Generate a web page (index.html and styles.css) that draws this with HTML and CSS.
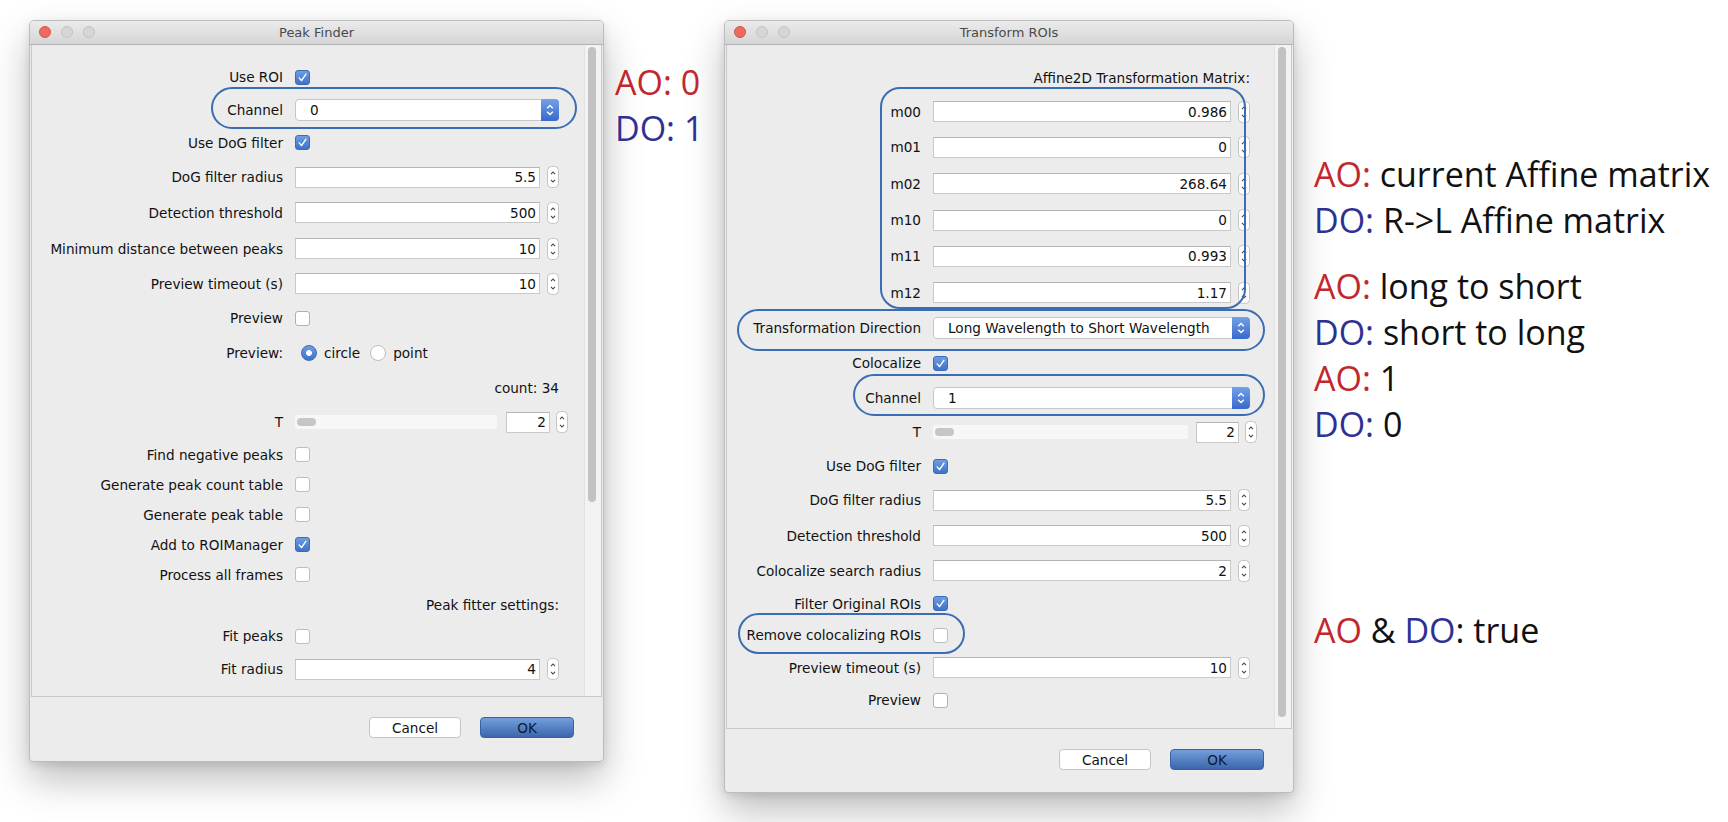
FILE: index.html
```html
<!DOCTYPE html>
<html>
<head>
<meta charset="utf-8">
<title>Peak Finder / Transform ROIs</title>
<link rel="stylesheet" href="styles.css">
</head>
<body>
<div class="desk">

  <section class="win win-peak">
    <header class="titlebar">
      <div class="lights"><span class="light close"></span><span class="light"></span><span class="light"></span></div>
      <div class="title">Peak Finder</div>
    </header>
    <div class="pane">
      <div class="form form-peak">
        <div class="lbl">Use ROI</div>
        <div class="ctl"><span class="cb on"><svg viewBox="0 0 13 13" width="13" height="13"><path d="M3.2 6.9 5.5 9.6 10 3.2" fill="none" stroke="#fff" stroke-width="1.4" stroke-linecap="round" stroke-linejoin="round"/></svg></span></div>

        <div class="lbl">Channel</div>
        <div class="ctl"><div class="combo"><span>0</span><span class="combo-arrow"><svg viewBox="0 0 18 22" width="18" height="22"><path d="M6.2 9.2 9 6.4 11.8 9.2M6.2 12.8 9 15.6 11.8 12.8" fill="none" stroke="#fff" stroke-width="1.4"/></svg></span></div></div>

        <div class="lbl">Use DoG filter</div>
        <div class="ctl"><span class="cb on"><svg viewBox="0 0 13 13" width="13" height="13"><path d="M3.2 6.9 5.5 9.6 10 3.2" fill="none" stroke="#fff" stroke-width="1.4" stroke-linecap="round" stroke-linejoin="round"/></svg></span></div>

        <div class="lbl">DoG filter radius</div>
        <div class="ctl num"><div class="field">5.5</div><svg class="spin" viewBox="0 0 12 22" width="12" height="22"><rect x=".5" y=".5" width="11" height="21" rx="4" fill="#fff" stroke="#c4c4c4"/><path d="M4 8.2 6 6 8 8.2M4 13.8 6 16 8 13.8" fill="none" stroke="#444" stroke-width="1.1"/></svg></div>

        <div class="lbl">Detection threshold</div>
        <div class="ctl num"><div class="field">500</div><svg class="spin" viewBox="0 0 12 22" width="12" height="22"><rect x=".5" y=".5" width="11" height="21" rx="4" fill="#fff" stroke="#c4c4c4"/><path d="M4 8.2 6 6 8 8.2M4 13.8 6 16 8 13.8" fill="none" stroke="#444" stroke-width="1.1"/></svg></div>

        <div class="lbl">Minimum distance between peaks</div>
        <div class="ctl num"><div class="field">10</div><svg class="spin" viewBox="0 0 12 22" width="12" height="22"><rect x=".5" y=".5" width="11" height="21" rx="4" fill="#fff" stroke="#c4c4c4"/><path d="M4 8.2 6 6 8 8.2M4 13.8 6 16 8 13.8" fill="none" stroke="#444" stroke-width="1.1"/></svg></div>

        <div class="lbl">Preview timeout (s)</div>
        <div class="ctl num"><div class="field">10</div><svg class="spin" viewBox="0 0 12 22" width="12" height="22"><rect x=".5" y=".5" width="11" height="21" rx="4" fill="#fff" stroke="#c4c4c4"/><path d="M4 8.2 6 6 8 8.2M4 13.8 6 16 8 13.8" fill="none" stroke="#444" stroke-width="1.1"/></svg></div>

        <div class="lbl">Preview</div>
        <div class="ctl"><span class="cb focus"></span></div>

        <div class="lbl">Preview:</div>
        <div class="ctl radios"><span class="radio on"></span><span class="rtext">circle</span><span class="radio"></span><span class="rtext">point</span></div>

        <div class="span">count: 34</div>

        <div class="lbl">T</div>
        <div class="ctl slide"><div class="slider"><span class="knob"></span></div><div class="field small">2</div><svg class="spin" viewBox="0 0 12 22" width="12" height="22"><rect x=".5" y=".5" width="11" height="21" rx="4" fill="#fff" stroke="#c4c4c4"/><path d="M4 8.2 6 6 8 8.2M4 13.8 6 16 8 13.8" fill="none" stroke="#444" stroke-width="1.1"/></svg></div>

        <div class="lbl">Find negative peaks</div>
        <div class="ctl"><span class="cb"></span></div>

        <div class="lbl">Generate peak count table</div>
        <div class="ctl"><span class="cb"></span></div>

        <div class="lbl">Generate peak table</div>
        <div class="ctl"><span class="cb"></span></div>

        <div class="lbl">Add to ROIManager</div>
        <div class="ctl"><span class="cb on"><svg viewBox="0 0 13 13" width="13" height="13"><path d="M3.2 6.9 5.5 9.6 10 3.2" fill="none" stroke="#fff" stroke-width="1.4" stroke-linecap="round" stroke-linejoin="round"/></svg></span></div>

        <div class="lbl">Process all frames</div>
        <div class="ctl"><span class="cb"></span></div>

        <div class="span">Peak fitter settings:</div>

        <div class="lbl">Fit peaks</div>
        <div class="ctl"><span class="cb"></span></div>

        <div class="lbl">Fit radius</div>
        <div class="ctl num"><div class="field">4</div><svg class="spin" viewBox="0 0 12 22" width="12" height="22"><rect x=".5" y=".5" width="11" height="21" rx="4" fill="#fff" stroke="#c4c4c4"/><path d="M4 8.2 6 6 8 8.2M4 13.8 6 16 8 13.8" fill="none" stroke="#444" stroke-width="1.1"/></svg></div>
      </div>
      <div class="track"><div class="thumb"></div></div>
    </div>
    <footer class="footer"><button class="btn">Cancel</button><button class="btn btn-ok">OK</button></footer>
    <div class="mark mark-peak-channel"></div>
  </section>

  <section class="win win-transform">
    <header class="titlebar">
      <div class="lights"><span class="light close"></span><span class="light"></span><span class="light"></span></div>
      <div class="title">Transform ROIs</div>
    </header>
    <div class="pane">
      <div class="form form-transform">
        <div class="span">Affine2D Transformation Matrix:</div>

        <div class="lbl">m00</div>
        <div class="ctl num"><div class="field">0.986</div><svg class="spin" viewBox="0 0 12 22" width="12" height="22"><rect x=".5" y=".5" width="11" height="21" rx="4" fill="#fff" stroke="#c4c4c4"/><path d="M4 8.2 6 6 8 8.2M4 13.8 6 16 8 13.8" fill="none" stroke="#444" stroke-width="1.1"/></svg></div>
        <div class="lbl">m01</div>
        <div class="ctl num"><div class="field">0</div><svg class="spin" viewBox="0 0 12 22" width="12" height="22"><rect x=".5" y=".5" width="11" height="21" rx="4" fill="#fff" stroke="#c4c4c4"/><path d="M4 8.2 6 6 8 8.2M4 13.8 6 16 8 13.8" fill="none" stroke="#444" stroke-width="1.1"/></svg></div>
        <div class="lbl">m02</div>
        <div class="ctl num"><div class="field">268.64</div><svg class="spin" viewBox="0 0 12 22" width="12" height="22"><rect x=".5" y=".5" width="11" height="21" rx="4" fill="#fff" stroke="#c4c4c4"/><path d="M4 8.2 6 6 8 8.2M4 13.8 6 16 8 13.8" fill="none" stroke="#444" stroke-width="1.1"/></svg></div>
        <div class="lbl">m10</div>
        <div class="ctl num"><div class="field">0</div><svg class="spin" viewBox="0 0 12 22" width="12" height="22"><rect x=".5" y=".5" width="11" height="21" rx="4" fill="#fff" stroke="#c4c4c4"/><path d="M4 8.2 6 6 8 8.2M4 13.8 6 16 8 13.8" fill="none" stroke="#444" stroke-width="1.1"/></svg></div>
        <div class="lbl">m11</div>
        <div class="ctl num"><div class="field">0.993</div><svg class="spin" viewBox="0 0 12 22" width="12" height="22"><rect x=".5" y=".5" width="11" height="21" rx="4" fill="#fff" stroke="#c4c4c4"/><path d="M4 8.2 6 6 8 8.2M4 13.8 6 16 8 13.8" fill="none" stroke="#444" stroke-width="1.1"/></svg></div>
        <div class="lbl">m12</div>
        <div class="ctl num"><div class="field">1.17</div><svg class="spin" viewBox="0 0 12 22" width="12" height="22"><rect x=".5" y=".5" width="11" height="21" rx="4" fill="#fff" stroke="#c4c4c4"/><path d="M4 8.2 6 6 8 8.2M4 13.8 6 16 8 13.8" fill="none" stroke="#444" stroke-width="1.1"/></svg></div>

        <div class="lbl">Transformation Direction</div>
        <div class="ctl"><div class="combo"><span>Long Wavelength to Short Wavelength</span><span class="combo-arrow"><svg viewBox="0 0 18 22" width="18" height="22"><path d="M6.2 9.2 9 6.4 11.8 9.2M6.2 12.8 9 15.6 11.8 12.8" fill="none" stroke="#fff" stroke-width="1.4"/></svg></span></div></div>

        <div class="lbl">Colocalize</div>
        <div class="ctl"><span class="cb on"><svg viewBox="0 0 13 13" width="13" height="13"><path d="M3.2 6.9 5.5 9.6 10 3.2" fill="none" stroke="#fff" stroke-width="1.4" stroke-linecap="round" stroke-linejoin="round"/></svg></span></div>

        <div class="lbl">Channel</div>
        <div class="ctl"><div class="combo"><span>1</span><span class="combo-arrow"><svg viewBox="0 0 18 22" width="18" height="22"><path d="M6.2 9.2 9 6.4 11.8 9.2M6.2 12.8 9 15.6 11.8 12.8" fill="none" stroke="#fff" stroke-width="1.4"/></svg></span></div></div>

        <div class="lbl">T</div>
        <div class="ctl slide"><div class="slider"><span class="knob"></span></div><div class="field small">2</div><svg class="spin" viewBox="0 0 12 22" width="12" height="22"><rect x=".5" y=".5" width="11" height="21" rx="4" fill="#fff" stroke="#c4c4c4"/><path d="M4 8.2 6 6 8 8.2M4 13.8 6 16 8 13.8" fill="none" stroke="#444" stroke-width="1.1"/></svg></div>

        <div class="lbl">Use DoG filter</div>
        <div class="ctl"><span class="cb on"><svg viewBox="0 0 13 13" width="13" height="13"><path d="M3.2 6.9 5.5 9.6 10 3.2" fill="none" stroke="#fff" stroke-width="1.4" stroke-linecap="round" stroke-linejoin="round"/></svg></span></div>

        <div class="lbl">DoG filter radius</div>
        <div class="ctl num"><div class="field">5.5</div><svg class="spin" viewBox="0 0 12 22" width="12" height="22"><rect x=".5" y=".5" width="11" height="21" rx="4" fill="#fff" stroke="#c4c4c4"/><path d="M4 8.2 6 6 8 8.2M4 13.8 6 16 8 13.8" fill="none" stroke="#444" stroke-width="1.1"/></svg></div>

        <div class="lbl">Detection threshold</div>
        <div class="ctl num"><div class="field">500</div><svg class="spin" viewBox="0 0 12 22" width="12" height="22"><rect x=".5" y=".5" width="11" height="21" rx="4" fill="#fff" stroke="#c4c4c4"/><path d="M4 8.2 6 6 8 8.2M4 13.8 6 16 8 13.8" fill="none" stroke="#444" stroke-width="1.1"/></svg></div>

        <div class="lbl">Colocalize search radius</div>
        <div class="ctl num"><div class="field">2</div><svg class="spin" viewBox="0 0 12 22" width="12" height="22"><rect x=".5" y=".5" width="11" height="21" rx="4" fill="#fff" stroke="#c4c4c4"/><path d="M4 8.2 6 6 8 8.2M4 13.8 6 16 8 13.8" fill="none" stroke="#444" stroke-width="1.1"/></svg></div>

        <div class="lbl">Filter Original ROIs</div>
        <div class="ctl"><span class="cb on"><svg viewBox="0 0 13 13" width="13" height="13"><path d="M3.2 6.9 5.5 9.6 10 3.2" fill="none" stroke="#fff" stroke-width="1.4" stroke-linecap="round" stroke-linejoin="round"/></svg></span></div>

        <div class="lbl">Remove colocalizing ROIs</div>
        <div class="ctl"><span class="cb"></span></div>

        <div class="lbl">Preview timeout (s)</div>
        <div class="ctl num"><div class="field">10</div><svg class="spin" viewBox="0 0 12 22" width="12" height="22"><rect x=".5" y=".5" width="11" height="21" rx="4" fill="#fff" stroke="#c4c4c4"/><path d="M4 8.2 6 6 8 8.2M4 13.8 6 16 8 13.8" fill="none" stroke="#444" stroke-width="1.1"/></svg></div>

        <div class="lbl">Preview</div>
        <div class="ctl"><span class="cb focus"></span></div>
      </div>
      <div class="track"><div class="thumb"></div></div>
    </div>
    <footer class="footer"><button class="btn">Cancel</button><button class="btn btn-ok">OK</button></footer>
    <div class="mark mark-matrix"></div>
    <div class="mark mark-direction"></div>
    <div class="mark mark-channel"></div>
    <div class="mark mark-remove"></div>
  </section>

  <div class="notes notes-left">
    <div class="ao">AO: 0</div>
    <div class="do">DO: 1</div>
  </div>

  <div class="notes notes-right">
    <div class="group">
      <div><span class="ao">AO:</span> current Affine matrix</div>
      <div><span class="do">DO:</span> R-&gt;L Affine matrix</div>
    </div>
    <div class="group group-gap">
      <div><span class="ao">AO:</span> long to short</div>
      <div><span class="do">DO:</span> short to long</div>
      <div><span class="ao">AO:</span> 1</div>
      <div><span class="do">DO:</span> 0</div>
    </div>
    <div class="group group-far">
      <div><span class="ao">AO</span> &amp; <span class="do">DO</span>: true</div>
    </div>
  </div>

</div>
</body>
</html>
```
FILE: styles.css
```css
* { box-sizing: border-box; margin: 0; padding: 0; }
html, body { width: 1728px; height: 822px; overflow: hidden; background: #ffffff; }
body { font-family: "DejaVu Sans", "Liberation Sans", sans-serif; font-size: 13.6px; color: #111; }

.desk { position: relative; width: 1728px; height: 822px; }

/* windows */
.win {
  position: absolute;
  display: flex;
  flex-direction: column;
  background: #ececec;
  border: 1px solid #bcbcbc;
  border-radius: 5px 5px 4px 4px;
  box-shadow: 0 18px 38px rgba(0,0,0,0.26), 0 3px 9px rgba(0,0,0,0.10);
}
.win-peak { left: 29px; top: 20px; width: 575px; height: 742px; }
.win-transform { left: 724px; top: 20px; width: 570px; height: 773px; }

.titlebar {
  flex: none;
  height: 24px;
  position: relative;
  display: flex;
  align-items: center;
  justify-content: center;
  background: linear-gradient(#ebebeb, #d5d5d5);
  border-bottom: 1px solid #b3b3b3;
  border-radius: 4px 4px 0 0;
}
.title { font-size: 13px; color: #4a4a4a; }
.lights { position: absolute; left: 9px; top: 5px; display: flex; gap: 10px; }
.light { width: 12px; height: 12px; border-radius: 50%; background: #d6d6d6; border: 1px solid #c3c3c3; }
.light.close { background: #ec6a5e; border-color: #d45449; }

.pane {
  flex: none;
  position: relative;
  display: flex;
  margin: 0 1px;
  border: 1px solid #c8c8c8;
  border-top: none;
}
.win-peak .pane { height: 652px; }
.win-transform .pane { height: 684px; }

.form {
  flex: 1;
  display: grid;
  align-content: start;
  column-gap: 12px;
  padding-top: 16px;
}
.form-peak {
  grid-template-columns: 251px 264px;
  grid-template-rows: 32px 33px 33.5px 35px 36px 36px 34.5px 34.5px 35.5px 34.5px 33.5px 31px 29.5px 30px 30px 30px 30.5px 32px 34.5px;
}
.form-transform {
  grid-template-columns: 194px 317px;
  grid-template-rows: 33px 35px 36.5px 36.5px 36px 36.5px 36px 35.5px 34px 35px 34.5px 33px 35px 36px 34.5px 31px 32px 33px 32px;
}

.lbl { display: flex; align-items: center; justify-content: flex-end; white-space: nowrap; }
.ctl { display: flex; align-items: center; }
.span { grid-column: 1 / -1; display: flex; align-items: center; justify-content: flex-end; white-space: nowrap; }

/* checkbox */
.cb {
  width: 15px; height: 15px;
  flex: none;
  display: flex; align-items: center; justify-content: center;
  background: #fff;
  border: 1px solid #bdbdbd;
  border-radius: 3px;
}
.cb.on { background: linear-gradient(#6e9de2, #3f72c8); border-color: #3d6cb7; }
.cb.focus { border-color: #94b4e8; }

/* radio */
.radios { padding-left: 6px; }
.radio { width: 16px; height: 16px; border-radius: 50%; background: #fff; border: 1px solid #bdbdbd; flex: none; }
.radio.on {
  background: radial-gradient(circle, #fff 0 2.6px, transparent 3.2px), linear-gradient(#6e9de2, #3f72c8);
  border-color: #3d6cb7;
}
.rtext { margin: 0 10px 0 7px; }

/* text fields */
.field {
  flex: none;
  height: 21px;
  display: flex; align-items: center; justify-content: flex-end;
  padding-right: 3px;
  background: #fff;
  border: 1px solid #c9c9c9;
  border-top-color: #b5b5b5;
}
.win-peak .num .field { width: 245px; }
.win-transform .num .field { width: 298px; }
.num .spin { margin-left: 7px; }
.spin { flex: none; }

/* slider row */
.slider { flex: none; height: 14px; background: #f7f7f7; border-radius: 2px; display: flex; align-items: center; padding-left: 2px; }
.knob { width: 19px; height: 8px; border-radius: 4px; background: #c6c6c6; }
.win-peak .slider { width: 202px; }
.win-transform .slider { width: 255px; }
.slide .field.small { width: 44px; margin-left: 9px; }
.win-transform .slide .field.small { width: 43px; margin-left: 8px; }
.slide .spin { margin-left: 6px; }

/* combo */
.combo {
  width: 100%;
  height: 22px;
  display: flex; align-items: center; justify-content: space-between;
  padding-left: 14px;
  background: #fff;
  border: 1px solid #c6c6c6;
  border-radius: 4px;
}
.combo-arrow {
  flex: none;
  width: 18px; height: 22px;
  margin: -1px -1px -1px 0;
  display: flex;
  background: linear-gradient(#72a1e8, #3869cc);
  border-radius: 0 4px 4px 0;
}

/* scroll track */
.track { flex: none; width: 17px; background: #f3f3f3; border-left: 1px solid #e2e2e2; padding-top: 2px; }
.thumb { width: 8px; margin-left: 3px; background: #c2c2c2; border-radius: 4px; }
.win-peak .thumb { height: 455px; }
.win-transform .thumb { height: 670px; }

/* footer */
.footer { flex: 1; display: flex; justify-content: flex-end; align-items: flex-start; gap: 19px; padding: 20px 29px 0 0; }
.btn {
  width: 92px; height: 21px;
  display: flex; align-items: center; justify-content: center;
  font-family: "DejaVu Sans", "Liberation Sans", sans-serif;
  font-size: 13.6px;
  color: #111;
  background: #fff;
  border: 1px solid #c5c5c5;
  border-radius: 4px;
}
.btn-ok { width: 94px; background: linear-gradient(#729fdc, #3b66ad); border-color: #3a62a2; color: #0e1a30; }

/* annotation outlines */
.mark { position: absolute; border: 2.5px solid #3b6db4; border-radius: 21px; pointer-events: none; }
.mark-peak-channel { left: 181px; top: 66px; width: 366px; height: 42px; }
.mark-matrix { left: 155px; top: 66px; width: 366px; height: 222px; border-radius: 20px; }
.mark-direction { left: 12px; top: 288px; width: 528px; height: 42px; }
.mark-channel { left: 128px; top: 353px; width: 412px; height: 42px; }
.mark-remove { left: 13px; top: 592px; width: 227px; height: 41px; }

/* notes */
.notes { position: absolute; font-family: "Open Sans", "Noto Sans", sans-serif; font-size: 34px; color: #111; white-space: nowrap; }
.notes-left { left: 615px; top: 58.5px; line-height: 46.7px; }
.notes-right { left: 1314px; top: 150.5px; line-height: 46px; }
.group-gap { margin-top: 20.6px; }
.group-far { margin-top: 160px; }
.ao { color: #c1272d; }
.do { color: #2e3192; }
```
